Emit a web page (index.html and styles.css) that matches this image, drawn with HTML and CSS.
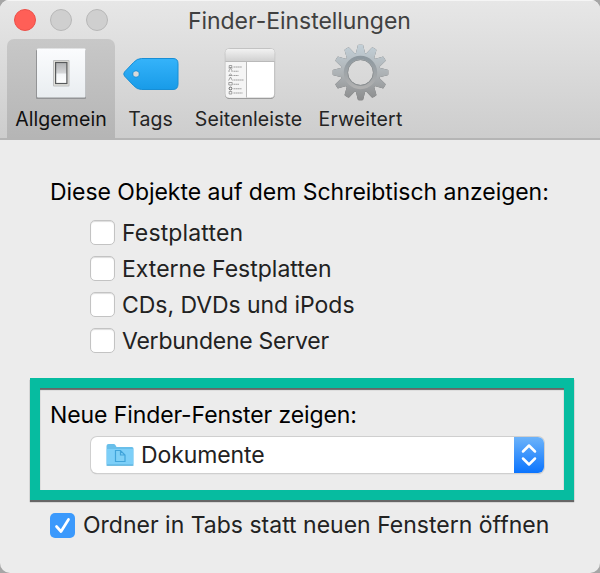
FILE: index.html
```
<!DOCTYPE html>
<html lang="de">
<head>
<meta charset="utf-8">
<title>Finder-Einstellungen</title>
<link rel="stylesheet" href="styles.css">
</head>
<body>
<main class="window">
  <header class="toolbar">
    <div class="titlebar">
      <div class="lights"><span class="light close"></span><span class="light"></span><span class="light"></span></div>
      <h1 class="title">Finder-Einstellungen</h1>
    </div>
    <nav class="tabs">
      <a class="tab general active">
        <svg class="icon" width="60" height="60" viewBox="0 0 60 60">
          <defs>
            <linearGradient id="plate" x2="0" y2="1"><stop stop-color="#fbfcfe"/><stop offset="1" stop-color="#e9edf0"/></linearGradient>
            <linearGradient id="rocker" x2="0" y2="1"><stop stop-color="#b0b1b3"/><stop offset=".5" stop-color="#d6d7d9"/><stop offset=".55" stop-color="#f4f6f8"/><stop offset="1" stop-color="#fff"/></linearGradient>
          </defs>
          <rect x="5" y="8" width="50" height="49" rx="1" fill="#939496"/>
          <rect x="6" y="6.500" width="48.500" height="49" rx="1" fill="url(#plate)"/>
          <rect x="22" y="18" width="16.500" height="26.500" rx="1" fill="#bebfc0"/>
          <rect x="23" y="19" width="14.500" height="24.500" fill="#e2e1dc"/>
          <rect x="24.600" y="20.500" width="11.300" height="21" fill="url(#rocker)" stroke="#57595b" stroke-width="1.200"/>
        </svg>
        <span class="label">Allgemein</span>
      </a>
      <a class="tab tags">
        <svg class="icon" width="60" height="60" viewBox="0 0 60 60">
          <defs><linearGradient id="blue" x2="0" y2="1"><stop stop-color="#35b3fa"/><stop offset="1" stop-color="#189be8"/></linearGradient></defs>
          <path fill-rule="evenodd" d="M20.500 16.500H52Q57 16.500 57 21.500V42Q57 47.500 52 47.500H20.500Q16 47.500 12.500 43.500L3.500 34Q2 32 3.500 30L12.500 20.500Q16 16.500 20.500 16.500ZM15 28.700a3.300 3.300 0 1 0 .01 0Z" fill="url(#blue)" stroke="#178ed5" stroke-width="1"/>
        </svg>
        <span class="label">Tags</span>
      </a>
      <a class="tab sidebar">
        <svg class="icon" width="60" height="60" viewBox="0 0 60 60">
          <defs><linearGradient id="bar" x2="0" y2="1"><stop stop-color="#f2f2f2"/><stop offset="1" stop-color="#d1d1d1"/></linearGradient></defs>
          <rect x="6" y="8" width="50" height="49" rx="4.500" fill="#929292"/>
          <rect x="6.300" y="6.500" width="49.400" height="49.500" rx="4" fill="#fff" stroke="#b0b0b0" stroke-width=".7"/>
          <path d="M6.500 19V10.500Q6.500 7 10.500 7H51.500Q55.500 7 55.500 10.500V19Z" fill="url(#bar)"/>
          <path d="M6.600 19.800H27V55.500H10Q6.600 55.500 6.600 52Z" fill="#f5f5f5"/>
          <path d="M6.500 19.500H55.500M27.500 19.500V55.500" stroke="#b9b9b9"/>
          <g fill="none" stroke="#8a8a8a" stroke-width=".8">
            <path d="M10.200 25.500V23.500H12.800V25.500ZM9.600 26H13.500M10 30V28.200L11.500 26.800 13 28.200V30M9.800 33.500Q11.500 30.500 13.300 33.500ZM9.600 38.500 11.500 35 13.400 38.500M9.800 40.500H13.200V43H9.800Z"/>
            <circle cx="11.500" cy="46.500" r="1.400" stroke="#444"/><path d="M10.200 49.500H12.800V52H10.200Z"/>
          </g>
          <path d="M14.500 25H23M14.500 29.300H19.500M14.500 33.500H19.500M14.500 38H24.500M14.500 42.300H20M14.500 46.700H22.500M14.500 51H23.500" stroke="#a0a0a0" stroke-width="1.100" stroke-dasharray="2 .4 1.500 .3"/>
        </svg>
        <span class="label">Seitenleiste</span>
      </a>
      <a class="tab advanced">
        <svg class="icon" width="60" height="60" viewBox="-29.500 -30.500 60 60">
          <defs>
            <linearGradient id="steel" gradientUnits="userSpaceOnUse" x1="0" y1="-28" x2="0" y2="28"><stop stop-color="#c3d0d8"/><stop offset=".5" stop-color="#aeb3b6"/><stop offset="1" stop-color="#8b8c8d"/></linearGradient>
            <linearGradient id="ring" x2="0" y2="1"><stop stop-color="#8d989f"/><stop offset="1" stop-color="#b0b0b0"/></linearGradient>
            <path id="tooth" d="M-4.700-19 -2.700-27Q-2.500-27.800-1.700-27.800H1.700Q2.500-27.800 2.700-27L4.700-19Z"/>
            <mask id="cog" maskUnits="userSpaceOnUse" x="-30" y="-30" width="60" height="60">
              <g fill="#fff"><circle r="20"/>
              <use href="#tooth"/><use href="#tooth" transform="rotate(30)"/><use href="#tooth" transform="rotate(60)"/><use href="#tooth" transform="rotate(90)"/><use href="#tooth" transform="rotate(120)"/><use href="#tooth" transform="rotate(150)"/><use href="#tooth" transform="rotate(180)"/><use href="#tooth" transform="rotate(210)"/><use href="#tooth" transform="rotate(240)"/><use href="#tooth" transform="rotate(270)"/><use href="#tooth" transform="rotate(300)"/><use href="#tooth" transform="rotate(330)"/></g>
              <circle r="12.500" fill="#000"/>
            </mask>
          </defs>
          <g class="cog"><rect x="-30" y="-30" width="60" height="60" fill="url(#steel)" mask="url(#cog)"/></g>
          <circle r="15" fill="none" stroke="url(#ring)" stroke-width="3.500"/>
          <circle r="12.900" fill="none" stroke="#868b8e" stroke-width=".8"/>
        </svg>
        <span class="label">Erweitert</span>
      </a>
    </nav>
  </header>
  <section class="content">
    <h2 class="heading">Diese Objekte auf dem Schreibtisch anzeigen:</h2>
    <div class="options">
      <label class="option"><span class="box"></span><span class="wide">Festplatten</span></label>
      <label class="option"><span class="box"></span><span>Externe Festplatten</span></label>
      <label class="option"><span class="box"></span><span class="snug">CDs, DVDs und iPods</span></label>
      <label class="option"><span class="box"></span><span class="tight">Verbundene Server</span></label>
    </div>
    <div class="highlight">
      <h2 class="heading">Neue Finder-Fenster zeigen:</h2>
      <div class="select">
        <svg class="folder" width="28" height="24" viewBox="0 0 28 24">
          <path d="M.5 3Q.5 1 2.500 1H8Q9 1 10 3L10.500 4H26Q27.500 4 27.500 5.500V21Q27.500 22.500 26 22.500H2Q.5 22.500.5 21Z" fill="#69bfea"/>
          <path d="M.8 6H27.200V21.500H.8Z" fill="#7dcff8"/>
          <path d="M.5 22.200H27.500" stroke="#58aeda"/>
          <path d="M9.500 7.500H14.500L19 12V18.500H9.500ZM14.500 7.500V12H19" fill="#80d0f6" stroke="#41a4da" stroke-width="1.200"/>
        </svg>
        <span class="value">Dokumente</span>
        <span class="stepper"><svg width="30" height="36" viewBox="0 0 30 36"><path d="M9 14.500 15 8.500 21 14.500M9 21.500 15 27.500 21 21.500" fill="none" stroke="#fff" stroke-width="2.500" stroke-linecap="round" stroke-linejoin="round"/></svg></span>
      </div>
    </div>
    <label class="option tabs-option"><span class="box checked"><svg width="25" height="25" viewBox="0 0 25 25"><path d="M6.500 13.500 11 18.500 18.500 6.500" fill="none" stroke="#fff" stroke-width="2.700" stroke-linecap="round" stroke-linejoin="round"/></svg></span><span>Ordner in Tabs statt neuen Fenstern öffnen</span></label>
  </section>
</main>
</body>
</html>
```
FILE: styles.css
```
* { box-sizing: border-box; }
body { margin: 0; background: #a6a6a6; font-family: Inter, "Liberation Sans", sans-serif; font-size: 23px; color: #222; }
svg { display: block; }
h1, h2 { margin: 0; font-weight: 400; font-size: 23px; }
.window { width: 600px; height: 573px; background: #ececec; border-radius: 9px 9px 10px 10px; overflow: hidden; }
.toolbar { height: 140px; background: linear-gradient(#e7e7e7, #cdcdcd); border-bottom: 2px solid #b5b5b5; box-shadow: inset 0 1px #f5f5f5; }
.titlebar { display: grid; grid-template-columns: 188px 1fr; height: 39px; align-items: center; }
.lights { display: flex; gap: 14px; padding-left: 14px; }
.light { width: 22px; height: 22px; border-radius: 50%; background: #cfcfcf; border: 1px solid #b7b7b7; }
.light.close { background: #ff5f57; border-color: #eb5049; }
.title { color: #404040; line-height: 28px; white-space: nowrap; letter-spacing: -0.05px; padding-top: 2px; }
.tabs { display: flex; padding-left: 7px; height: 99px; }
.tab { display: flex; flex-direction: column; align-items: center; padding-top: 3px; color: #242424; font-size: 19.5px; }
.active { background: linear-gradient(#c8c8c8, #b5b5b5); border-radius: 7px 7px 0 0; color: #111; }
.general { width: 108px; }
.tags { width: 71px; }
.sidebar { width: 125px; }
.advanced { width: 99px; }
.label { line-height: 24px; margin-top: 5px; white-space: nowrap; letter-spacing: 0.08px; }
.advanced .label { letter-spacing: 0.15px; }
.cog { filter: drop-shadow(0 0 .5px #666); }
.content { padding: 38px 26px 0 30px; }
.heading { padding-left: 20px; line-height: 28px; white-space: nowrap; color: #000; letter-spacing: -0.04px; }
.options { display: flex; flex-direction: column; gap: 8px; padding: 13px 0 0 60px; }
.option { display: flex; align-items: center; gap: 7px; height: 28px; line-height: 28px; white-space: nowrap; }
.wide { letter-spacing: 0.15px; }
.snug { letter-spacing: -0.05px; }
.tight { letter-spacing: -0.25px; }
.box { width: 25px; height: 25px; flex: none; border-radius: 5px; background: #fff; border: 1px solid #c3c3c3; box-shadow: inset 0 1px 1px #ddd; }
.options .box { margin-top: -1px; }
.box.checked { background: #3b99fc; border: 0; box-shadow: none; }
.highlight { height: 122px; margin-top: 23px; border: 10px solid #06bca0; box-shadow: 0 2px 1px #666, inset 0 2px 1px #666; padding: 13px 20px 0 10px; }
.highlight .heading { padding-left: 0; letter-spacing: -0.1px; }
.select { display: flex; align-items: center; margin: 8px 0 0 41px; height: 36px; background: #fff; border-radius: 6px; box-shadow: 0 0 0 1px #cfcfcf, 0 1px 1px #aaa; overflow: hidden; }
.folder { margin-left: 15px; }
.value { margin-left: 7px; flex: 1; letter-spacing: -0.1px; }
.stepper { width: 30px; background: linear-gradient(#6cb3fa, #0b74fe); }
.tabs-option { padding-left: 20px; margin-top: 11px; gap: 8px; }
```
